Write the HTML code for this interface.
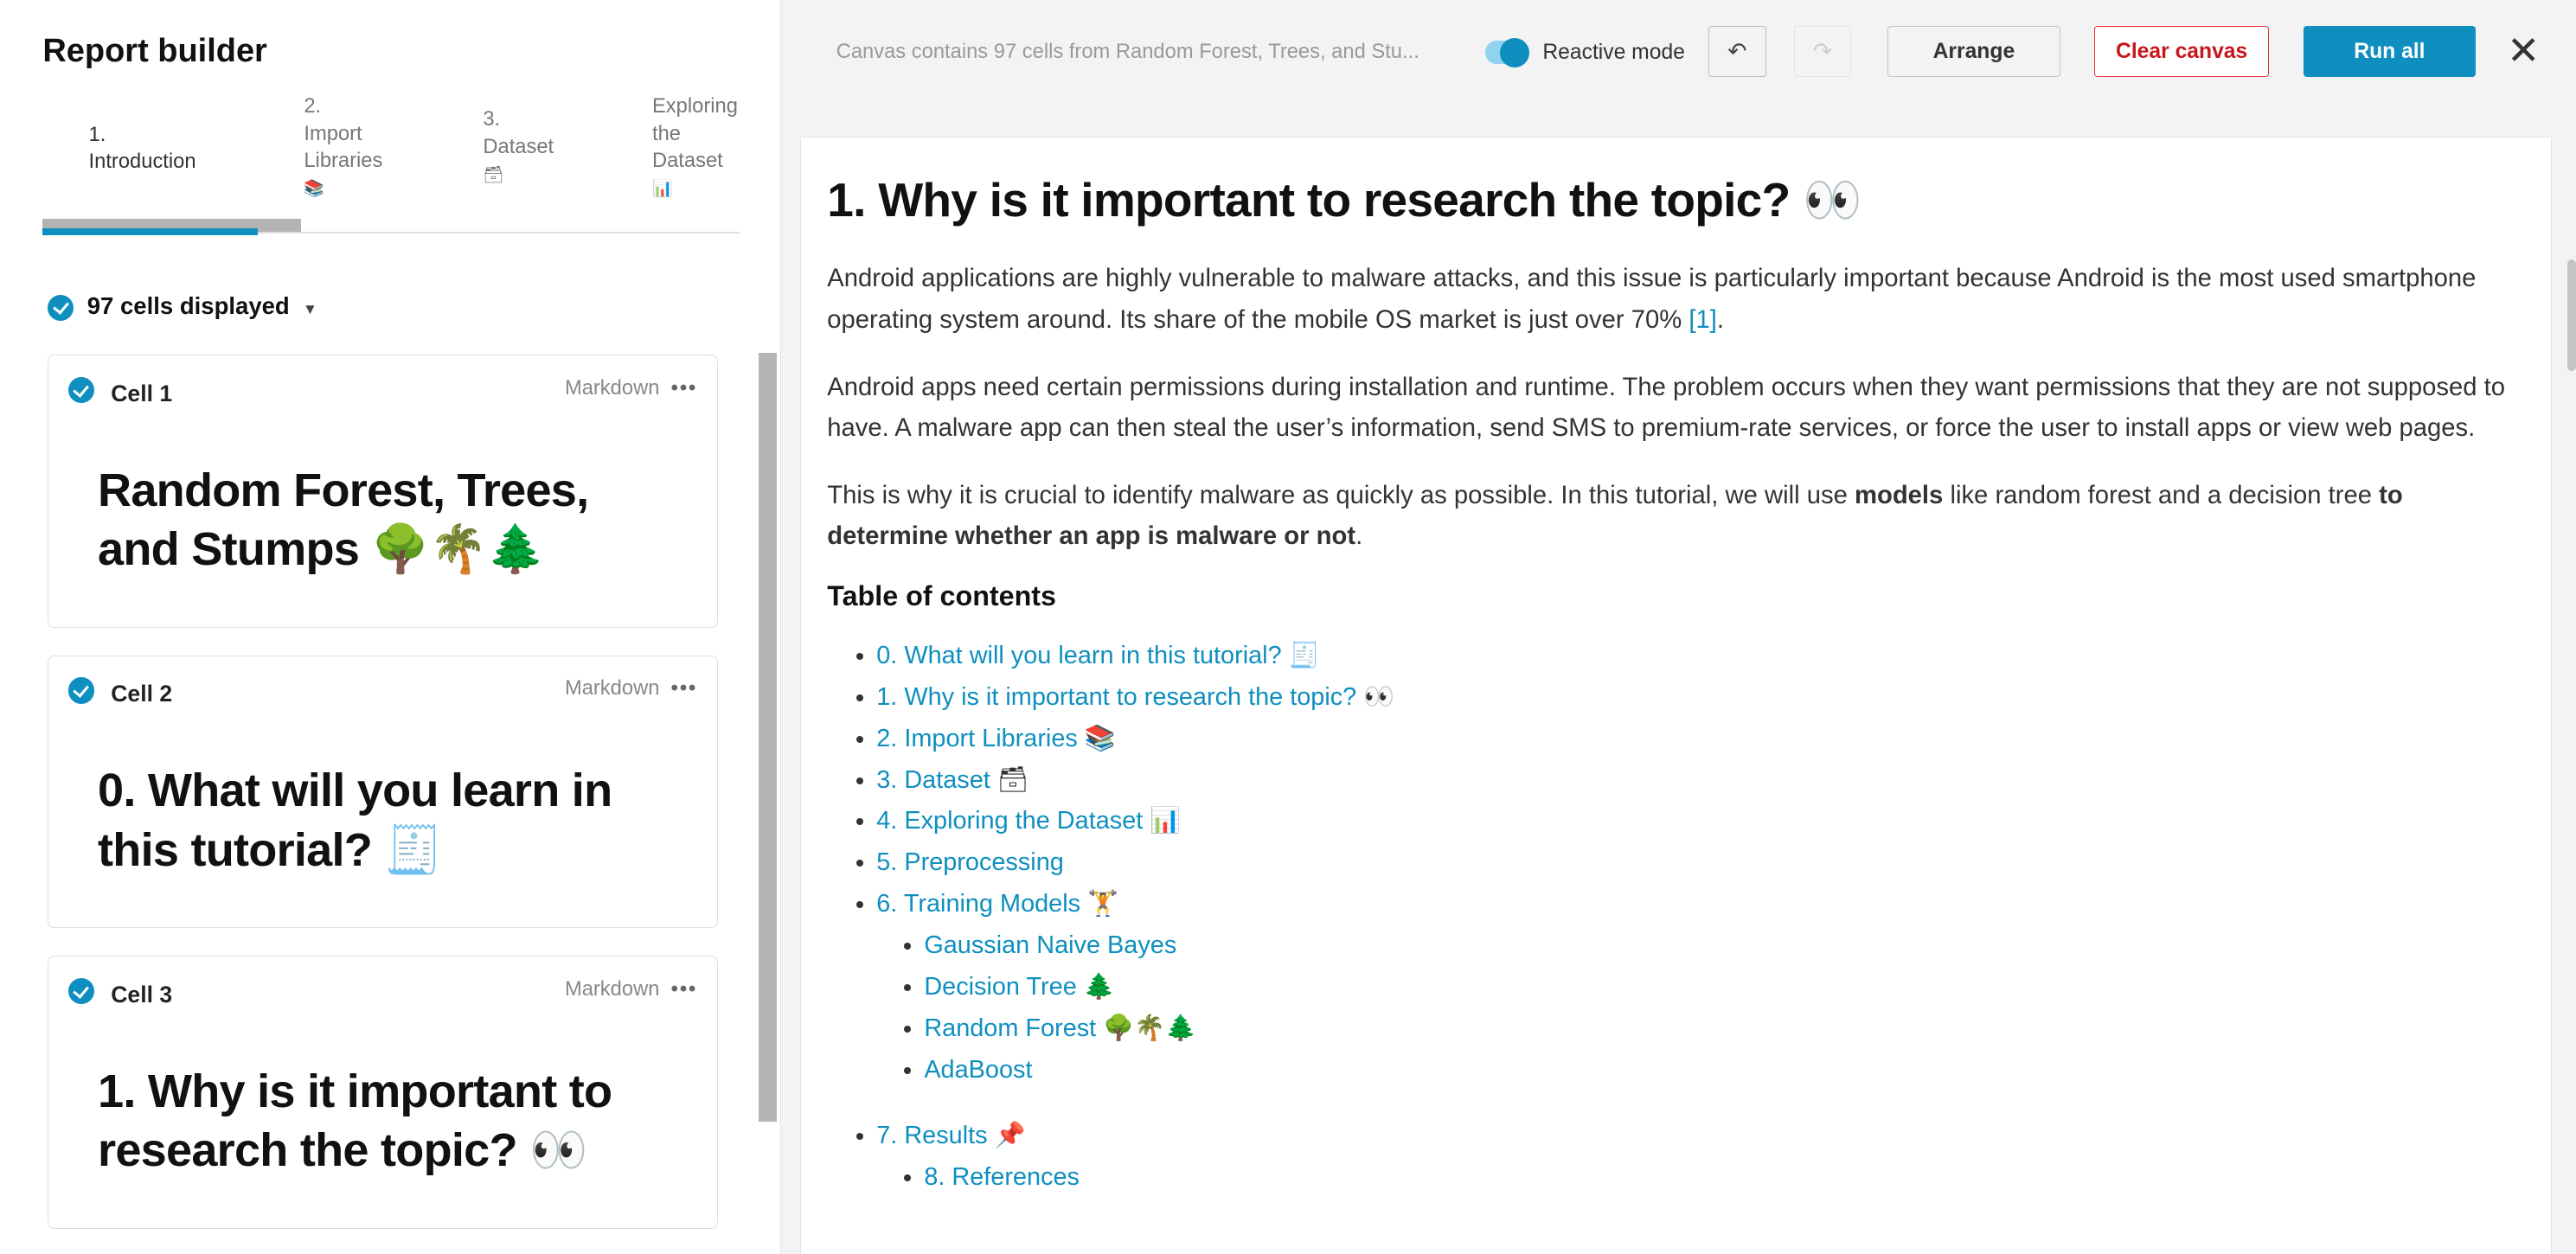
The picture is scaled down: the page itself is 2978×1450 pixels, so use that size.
<!DOCTYPE html>
<html><head><meta charset="utf-8"><style>
html,body{margin:0;padding:0;width:2978px;height:1450px;overflow:hidden;background:#f3f3f3}
#w{zoom:1.8992;width:1568px;height:764px;position:relative;font-family:"Liberation Sans","Noto Sans CJK JP",sans-serif;color:#222}
.a{position:absolute}
.left{left:0;top:0;width:475px;height:764px;background:#fff;border-right:1px solid #e2e2e2}
.chk{display:inline-block;width:16px;height:16px;border-radius:50%;background:#0e8fbf;position:relative;vertical-align:middle}
.chk:after{content:"";position:absolute;left:5px;top:3px;width:4px;height:7px;border:solid #fff;border-width:0 2px 2px 0;transform:rotate(40deg)}
.card{left:29px;width:407px;background:#fff;border:1px solid #dedede;border-radius:4px}
.card .t{position:absolute;left:38px;top:15px;font-size:14px;font-weight:bold}
.card .c{position:absolute;left:12px;top:13px}
.card .m{position:absolute;right:12px;top:13px;font-size:12.5px;color:#888}
.card h2{position:absolute;left:30px;top:64px;margin:0;font-size:28.5px;line-height:36px;font-weight:bold;color:#111;letter-spacing:-.4px}
.tab{font-size:12.5px;line-height:16.5px;color:#777}
.btn{position:absolute;top:16px;height:31px;box-sizing:border-box;font-size:13px;font-weight:bold;display:flex;align-items:center;justify-content:center;border-radius:2px}
.doc{left:487px;top:83px;width:1065px;height:690px;background:#fff;border:1px solid #e3e3e3}
.doc p{margin:0;font-size:15.4px;line-height:25px;color:#333}
a{color:#0e8fbf;text-decoration:none}
ul{margin:0;padding-left:30px;font-size:15.2px;line-height:25.2px}
ul ul{padding-left:29px;list-style:disc}
li{color:#333}
</style></head><body><div id="w">
<div class="a left">
 <div class="a" style="left:26px;top:20px;font-size:20px;font-weight:bold;color:#111">Report builder</div>
 <div class="a tab" style="left:54px;top:74px;color:#333">1.<br>Introduction</div>
 <div class="a tab" style="left:185px;top:57px">2.<br>Import<br>Libraries<br><span style="font-size:10px">📚</span></div>
 <div class="a tab" style="left:294px;top:65px">3.<br>Dataset<br><span style="font-size:10px">🗃</span></div>
 <div class="a tab" style="left:397px;top:57px;width:52px;overflow:hidden;white-space:nowrap">Exploring<br>the<br>Dataset<br><span style="font-size:10px">📊</span></div>
 <div class="a" style="left:26px;top:141px;width:424px;height:1px;background:#ddd"></div>
 <div class="a" style="left:26px;top:133px;width:157px;height:8px;background:#b3b3b3"></div>
 <div class="a" style="left:26px;top:139px;width:131px;height:4px;background:#0e8fbf"></div>
 <div class="a" style="left:29px;top:178px;font-size:14.5px;font-weight:bold;color:#111"><span class="chk"></span> &nbsp;97 cells displayed &nbsp;<span style="font-size:9px;color:#444">▼</span></div>
 <div class="a" style="left:462px;top:215px;width:11px;height:468px;background:#b5b5b5"></div>
 <div class="a card" style="top:216px;height:165px"><span class="c chk"></span><span class="t">Cell 1</span><span class="m">Markdown &nbsp;<b style="color:#666;letter-spacing:1px">•••</b></span><h2>Random Forest, Trees,<br>and Stumps 🌳🌴🌲</h2></div>
 <div class="a card" style="top:399px;height:165px"><span class="c chk"></span><span class="t">Cell 2</span><span class="m">Markdown &nbsp;<b style="color:#666;letter-spacing:1px">•••</b></span><h2>0. What will you learn in<br>this tutorial? 🧾</h2></div>
 <div class="a card" style="top:582px;height:165px"><span class="c chk"></span><span class="t">Cell 3</span><span class="m">Markdown &nbsp;<b style="color:#666;letter-spacing:1px">•••</b></span><h2>1. Why is it important to<br>research the topic? 👀</h2></div>
</div>
<div class="a" style="left:509px;top:25px;font-size:12.5px;color:#999">Canvas contains 97 cells from Random Forest, Trees, and Stu...</div>
<div class="a" style="left:904px;top:25px;width:26px;height:14px;border-radius:7px;background:#8fd3ee"></div>
<div class="a" style="left:913px;top:23px;width:18px;height:18px;border-radius:50%;background:#0e8fbf"></div>
<div class="a" style="left:939px;top:25px;font-size:13px;color:#333">Reactive mode</div>
<div class="btn" style="left:1040px;width:35px;border:1px solid #bbb;font-size:14px;font-weight:normal;color:#444">↶</div>
<div class="btn" style="left:1092px;width:35px;border:1px solid #e2e2e2;font-size:14px;font-weight:normal;color:#ccc">↷</div>
<div class="btn" style="left:1149px;width:105px;border:1px solid #c3c3c3;color:#333">Arrange</div>
<div class="btn" style="left:1275px;width:106px;border:1px solid #e33;color:#c8161d;background:#fff">Clear canvas</div>
<div class="btn" style="left:1402px;width:105px;background:#0e8fbf;color:#fff">Run all</div>
<div class="a" style="left:1526px;top:18px;font-size:24px;color:#333;line-height:26px">✕</div>
<div class="a doc">
 <div class="a" style="left:16px;top:21px;font-size:29px;font-weight:bold;color:#111;letter-spacing:-.4px">1. Why is it important to research the topic? 👀</div>
 <div class="a" style="left:16px;top:74px;width:1036px">
 <p>Android applications are highly vulnerable to malware attacks, and this issue is particularly important because Android is the most used smartphone operating system around. Its share of the mobile OS market is just over 70% <a>[1]</a>.</p>
 <p style="margin-top:16px">Android apps need certain permissions during installation and runtime. The problem occurs when they want permissions that they are not supposed to have. A malware app can then steal the user’s information, send SMS to premium-rate services, or force the user to install apps or view web pages.</p>
 <p style="margin-top:16px">This is why it is crucial to identify malware as quickly as possible. In this tutorial, we will use <b>models</b> like random forest and a decision tree <b>to determine whether an app is malware or not</b>.</p>
 <div style="margin-top:14px;font-size:17px;font-weight:bold;color:#111">Table of contents</div>
 <ul style="margin-top:14px">
 <li><a>0. What will you learn in this tutorial?</a> 🧾</li>
 <li><a>1. Why is it important to research the topic?</a> 👀</li>
 <li><a>2. Import Libraries</a> 📚</li>
 <li><a>3. Dataset</a> 🗃</li>
 <li><a>4. Exploring the Dataset</a> 📊</li>
 <li><a>5. Preprocessing</a></li>
 <li><a>6. Training Models</a> 🏋<ul>
  <li><a>Gaussian Naive Bayes</a></li><li><a>Decision Tree</a> 🌲</li><li><a>Random Forest</a> 🌳🌴🌲</li><li><a>AdaBoost</a></li></ul></li>
 <li style="margin-top:15px"><a>7. Results</a> 📌<ul><li><a>8. References</a></li></ul></li>
 </ul></div>
</div>
<div class="a" style="left:1563px;top:158px;width:5px;height:68px;background:#c4c4c4;border-radius:3px"></div>
</div></body></html>
